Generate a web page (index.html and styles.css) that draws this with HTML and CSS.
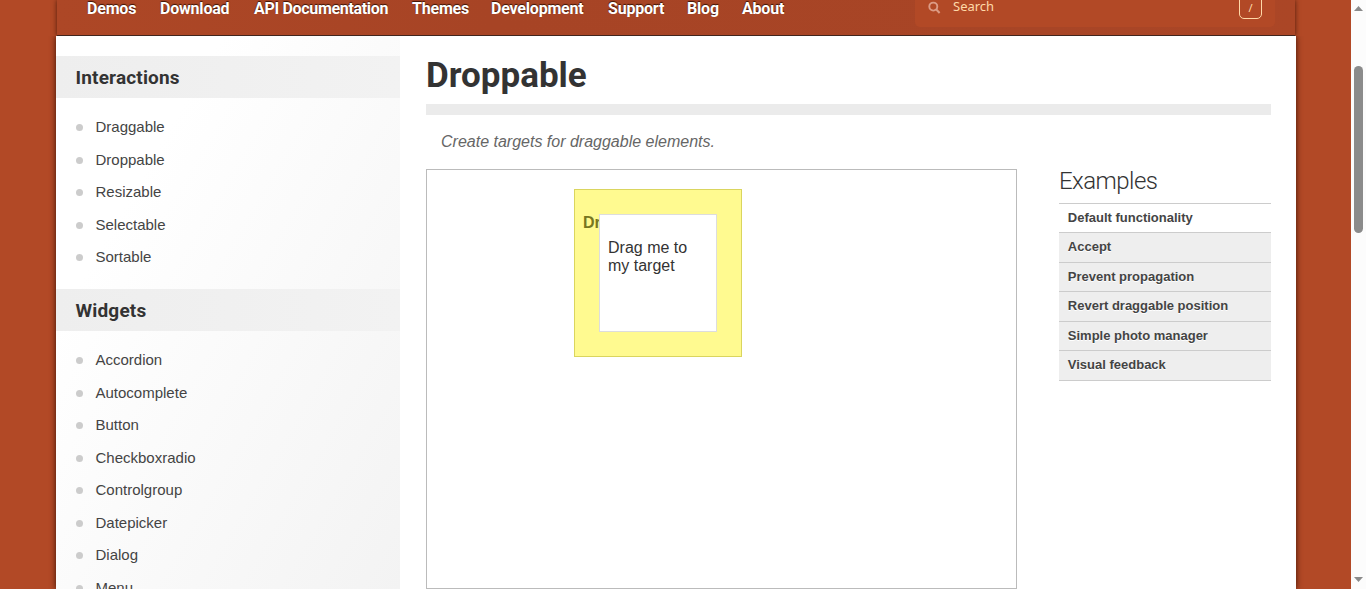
FILE: index.html
```
<!DOCTYPE html>
<html lang="en">
<head>
<meta charset="utf-8">
<title>Droppable</title>
<link rel="stylesheet" href="styles.css">
</head>
<body>
<div class="window">
  <div class="page">
    <header class="header">
      <nav class="nav">
        <a>Demos</a><a>Download</a><a>API Documentation</a><a>Themes</a><a>Development</a><a>Support</a><a>Blog</a><a>About</a>
      </nav>
      <div class="search">
        <svg class="search-icon" width="14" height="14" viewBox="0 0 14 14"><circle cx="5.3" cy="5.6" r="4" fill="none" stroke="currentColor" stroke-width="1.9"/><path d="M8.3 8.6L11.6 11.9" stroke="currentColor" stroke-width="2.1"/></svg>
        <span class="search-label">Search</span>
        <kbd class="key">/</kbd>
      </div>
    </header>
    <div class="content">
      <aside class="sidebar">
        <h3 class="side-title">Interactions</h3>
        <ul class="side-list">
          <li>Draggable</li><li>Droppable</li><li>Resizable</li><li>Selectable</li><li>Sortable</li>
        </ul>
        <h3 class="side-title">Widgets</h3>
        <ul class="side-list">
          <li>Accordion</li><li>Autocomplete</li><li>Button</li><li>Checkboxradio</li><li>Controlgroup</li><li>Datepicker</li><li>Dialog</li><li>Menu</li>
        </ul>
      </aside>
      <main class="main">
        <h1 class="title">Droppable</h1>
        <p class="desc">Create targets for draggable elements.</p>
        <div class="columns">
          <div class="demo">
            <div class="drop"><p>Drop here</p><div class="drag"><p>Drag me to my target</p></div></div>
          </div>
          <section class="examples">
            <h2 class="examples-title">Examples</h2>
            <ul class="example-list">
              <li class="active">Default functionality</li><li>Accept</li><li>Prevent propagation</li><li>Revert draggable position</li><li>Simple photo manager</li><li>Visual feedback</li>
            </ul>
          </section>
        </div>
      </main>
    </div>
  </div>
  <div class="scrollbar">
    <svg width="9" height="5" viewBox="0 0 9 5"><path d="M0 5L4.5 0L9 5Z" fill="#8b8b8b"/></svg>
    <div class="thumb"></div>
    <svg width="9" height="5" viewBox="0 0 9 5"><path d="M0 0L4.5 5L9 0Z" fill="#8b8b8b"/></svg>
  </div>
</div>
</body>
</html>
```
FILE: styles.css
```
* { box-sizing: border-box; }
body { margin: 0; overflow: hidden; font-family: "Liberation Sans", Arial, sans-serif; color: #333; }
h1, h2, h3, p, ul { margin: 0; padding: 0; }
ul { list-style: none; }
.window { display: flex; height: 589px; background: #b24926; overflow: hidden; }
.page { flex: 1; padding: 0 55px 0 56px; display: flex; flex-direction: column; }
.header { height: 36px; flex: none; margin: 0 1px; display: flex; justify-content: space-between; align-items: flex-start; padding: 0 20px 0 30px; background: linear-gradient(90deg, #ad4726, #a74425 35%, #a84526 80%, #ab4626); border-bottom: 1px solid #41251d; box-shadow: 0 0 5px #4d1b0b; clip-path: inset(0 -8px 0 -8px); }
.nav { display: grid; grid-template-columns: 49px 70px 134px 55px 93px 55px 31px 42px; gap: 24px; font: 700 16px/18px Roboto, sans-serif; color: #fff; text-shadow: 0 -1px 1px #391307; white-space: nowrap; }
.nav a { letter-spacing: -0.2px; }
.nav a:nth-child(3) { letter-spacing: -0.32px; }
.search { display: flex; align-items: flex-start; width: 360px; height: 27px; padding: 0 13px; background: #b24926; border-radius: 0 0 5px 5px; color: #ffd9a8; }
.search-icon { color: #dc9b85; margin-top: 1px; }
.search-label { font: 13px/12px "Noto Sans", sans-serif; margin-left: 11px; flex: 1; }
.key { width: 23px; height: 24px; margin-top: -5px; border: 1px solid #ffd9a8; border-radius: 5px; font: 11px/23px "Noto Sans", sans-serif; text-align: center; }
.content { flex: 1; display: flex; background: #fff; box-shadow: 0 0 6px #3a1206; clip-path: inset(0 -8px 0 -8px); min-height: 0; }
.sidebar { width: 344px; padding-top: 20px; background: linear-gradient(120deg, #fff 25%, #f3f3f3); overflow: hidden; }
.side-title { height: 42px; padding-left: 19.5px; background: linear-gradient(90deg, #eee, #f2f2f2); font: 700 19px/43px Roboto, sans-serif; letter-spacing: 0.17px; }
.side-list { padding: 12.3px 0 16.2px 19.5px; }
.side-list li { display: flex; align-items: center; height: 32.5px; font-size: 15px; color: #444; gap: 13px; }
.side-list li::before { content: ""; width: 7px; height: 7px; border-radius: 50%; background: #ccc; margin-top: 2px; }
.main { padding: 20px 25px 0 26px; flex: 1; }
.title { height: 59px; border-bottom: 11px solid #ebebeb; font: 700 35px/39px Roboto, sans-serif; }
.desc { margin: 17px 15px 0; font: italic 16px/20px "Liberation Sans", sans-serif; color: #666; }
.columns { display: flex; justify-content: space-between; padding-top: 17px; }
.demo { width: 591px; height: 420px; border: 1px solid #bbb; }
.drop { position: relative; width: 168px; height: 168px; margin: 19px 0 0 147px; padding: 24px 8px; border: 1px solid #dad55e; background: #fffa90; color: #777620; font: 700 16px/18px "Liberation Sans", sans-serif; }
.drag { position: absolute; left: 24px; top: 24px; width: 118px; height: 118px; padding: 24px 8px; background: #fff; border: 1px solid #ddd; color: #333; font-weight: 400; }
.examples { width: 212px; }
.examples-title { height: 34px; font: 300 24px/24px Roboto, sans-serif; letter-spacing: -0.55px; }
.example-list { border-top: 1px solid #ccc; font: 700 13px/28.8px "Liberation Sans", sans-serif; color: #444; }
.example-list li { height: 29.45px; padding-left: 8.8px; background: #eee; border-bottom: 1px solid #ccc; text-shadow: 0 1px 0 #fff; }
.example-list .active { background: #fff; }
.scrollbar { width: 15px; display: flex; flex-direction: column; align-items: center; background: #fcfcfc; padding: 6px 0; }
.scrollbar svg { flex: none; }
.thumb { width: 9px; height: 167px; margin: 55px 0 344px; border-radius: 5px; background: #8b8b8b; flex: none; }
```
